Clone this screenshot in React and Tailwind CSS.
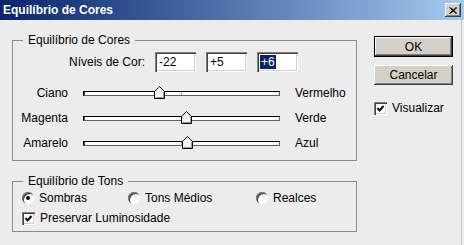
import React from "react";

const raised =
  "bg-[#d4d0c8] shadow-[inset_-1px_-1px_0_#404040,inset_1px_1px_0_#ffffff,inset_-2px_-2px_0_#808080]";
const sunken =
  "bg-white shadow-[inset_1px_1px_0_#808080,inset_2px_2px_0_#404040,inset_-1px_-1px_0_#ffffff,inset_-2px_-2px_0_#d4d0c8]";

const ROWS = [
  { left: "Ciano", right: "Vermelho", value: -22 },
  { left: "Magenta", right: "Verde", value: 5 },
  { left: "Amarelo", right: "Azul", value: 6 },
];

function Slider({ value }) {
  // trilho de 197px, -100..+100
  const center = 98.5 + value * 0.985;
  return (
    <div className="relative w-[197px] h-[14px]">
      <div className="absolute left-0 right-0 top-[5px] h-[5px] bg-white border-t border-l border-[#000000] border-b border-r border-b-[#606060] border-r-[#606060] shadow-[inset_1px_0_0_#404040]">
        <div className="absolute left-[97px] top-0 w-[1px] h-[3px] bg-[#a0a0a0]" />
      </div>
      <svg
        width="11"
        height="13"
        viewBox="0 0 11 13"
        className="absolute top-0"
        style={{ left: `${center - 5.5}px` }}
      >
        <polygon points="0.5,12.5 0.5,5.5 5.5,0.5 10.5,5.5 10.5,12.5" fill="#f4f4f4" stroke="#000" />
        <polyline points="1.5,11.5 9.5,11.5 9.5,6" fill="none" stroke="#9a9a9a" />
      </svg>
    </div>
  );
}

function Radio({ checked, label }) {
  return (
    <div className="flex items-center gap-[5px]">
      <div className="w-[12px] h-[12px] rounded-full bg-white shadow-[inset_1px_1px_0_#808080,inset_2px_2px_0_#404040,inset_-1px_-1px_0_#ffffff] flex items-center justify-center">
        {checked && <div className="w-[4px] h-[4px] rounded-full bg-black" />}
      </div>
      <span>{label}</span>
    </div>
  );
}

function Check({ label }) {
  return (
    <div className="flex items-center gap-[5px]">
      <div className={`w-[13px] h-[13px] ${sunken} flex items-center justify-center`}>
        <svg width="9" height="9" viewBox="0 0 9 9">
          <polyline points="1.5,4 3.5,6.5 7.5,2" fill="none" stroke="#000" strokeWidth="2" />
        </svg>
      </div>
      <span>{label}</span>
    </div>
  );
}

function App() {
  return (
    <div className="w-[464px] h-[245px] overflow-hidden bg-[#ececec] text-[12px] text-black font-['Liberation_Sans',Arial,sans-serif] flex flex-col">
      <div className="h-[20px] shrink-0 flex items-center bg-gradient-to-r from-[#0a246a] to-[#a6caf0] pl-[3px]">
        <span className="text-white font-bold text-[12px]">Equilíbrio de Cores</span>
        <div className={`ml-auto mr-[3px] w-[16px] h-[14px] ${raised} flex items-center justify-center`}>
          <svg width="8" height="7" viewBox="0 0 8 7">
            <path d="M0.5 0.5 L7 6.5 M1.5 0.5 L8 6.5 M7 0.5 L0.5 6.5 M8 0.5 L1.5 6.5" stroke="#000" strokeWidth="1" />
          </svg>
        </div>
      </div>

      <div className="flex flex-1 pl-[12px]">
        <div className="w-[345px] flex flex-col">
          <fieldset className="mt-[13px] h-[128px] border border-[#8c8c8c]">
            <legend className="ml-[10px] px-[5px] leading-[14px]">Equilíbrio de Cores</legend>
            <div className="flex items-center mt-[5px]">
              <span className="w-[132px] text-right">Níveis de Cor:</span>
              <div className="flex gap-[10px] ml-[10px]">
                <div className={`w-[41px] h-[20px] ${sunken} flex items-center pl-[4px]`}>-22</div>
                <div className={`w-[41px] h-[20px] ${sunken} flex items-center pl-[4px]`}>+5</div>
                <div className={`w-[41px] h-[20px] ${sunken} flex items-center pl-[3px]`}>
                  <span className="bg-[#0a246a] text-white leading-[14px] px-[1px]">+6</span>
                </div>
              </div>
            </div>
            <div className="mt-[8px] flex flex-col">
              {ROWS.map((r) => (
                <div key={r.left} className="h-[25px] flex items-center">
                  <span className="w-[55px] text-right">{r.left}</span>
                  <div className="ml-[15px]">
                    <Slider value={r.value} />
                  </div>
                  <span className="ml-[15px]">{r.right}</span>
                </div>
              ))}
            </div>
          </fieldset>

          <fieldset className="mt-[13px] h-[58px] border border-[#8c8c8c]">
            <legend className="ml-[10px] px-[5px] leading-[14px]">Equilíbrio de Tons</legend>
            <div className="h-[20px] flex items-center pl-[9px]">
              <div className="w-[106px]">
                <Radio checked label="Sombras" />
              </div>
              <div className="w-[128px]">
                <Radio label="Tons Médios" />
              </div>
              <Radio label="Realces" />
            </div>
            <div className="h-[20px] flex items-center pl-[9px]">
              <Check label="Preservar Luminosidade" />
            </div>
          </fieldset>
        </div>

        <div className="ml-[17px] w-[79px] flex flex-col">
          <div className="mt-[16px] h-[21px] border border-black">
            <div className={`h-full ${raised} flex items-center justify-center`}>OK</div>
          </div>
          <div className={`mt-[8px] h-[20px] ${raised} flex items-center justify-center`}>Cancelar</div>
          <div className="mt-[14px]">
            <Check label="Visualizar" />
          </div>
        </div>

        <div className="ml-auto mr-[2px] w-[1px] bg-[#c8c8c8]" />
      </div>
    </div>
  );
}

export default App;
